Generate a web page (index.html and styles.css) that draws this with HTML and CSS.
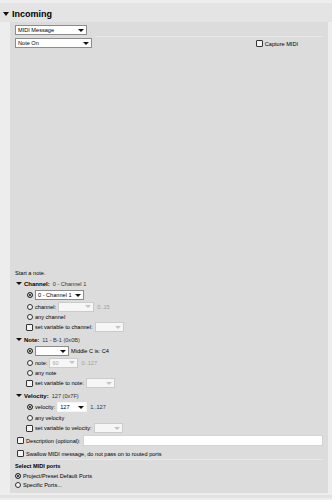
FILE: index.html
```html
<!DOCTYPE html>
<html lang="en">
<head>
  <meta charset="UTF-8" />
  <title>Incoming</title>
  <link rel="stylesheet" href="styles.css">
</head>
<body>
  <div class="section-head"><span class="caret"></span>Incoming</div>

  <div class="panel">
    <div class="type-row">
      <div class="select w72">MIDI Message<span class="arrow"></span></div>
    </div>

    <div class="message-row">
      <div class="select w77">Note On<span class="arrow"></span></div>
      <div class="message-area">
        <div class="check"><span class="box"></span>Capture MIDI</div>
      </div>
    </div>

    <div class="hint">Start a note.</div>

    <!-- channel -->
    <div class="group-head"><span class="caret small"></span><b>Channel:</b><span class="val">0 - Channel 1</span></div>
    <div class="opt sel"><span class="radio on"></span><div class="select w49">0 - Channel 1<span class="arrow"></span></div></div>
    <div class="opt"><span class="radio"></span>channel:<div class="select off w36"><span class="arrow"></span></div><span class="range">0..15</span></div>
    <div class="opt any"><span class="radio"></span>any channel</div>
    <div class="opt var"><span class="box"></span>set variable to channel:<div class="select off w29"><span class="arrow"></span></div></div>

    <!-- note -->
    <div class="group-head"><span class="caret small"></span><b>Note:</b><span class="val">11 - B-1 (0x0B)</span></div>
    <div class="opt sel"><span class="radio on"></span><div class="select w34"><span class="arrow"></span></div>Middle C is: C4</div>
    <div class="opt"><span class="radio"></span>note:<div class="select off w29">60<span class="arrow"></span></div><span class="range">0..127</span></div>
    <div class="opt any"><span class="radio"></span>any note</div>
    <div class="opt var"><span class="box"></span>set variable to note:<div class="select off w29"><span class="arrow"></span></div></div>

    <!-- velocity -->
    <div class="group-head"><span class="caret small"></span><b>Velocity:</b><span class="val">127 (0x7F)</span></div>
    <div class="opt sel"><span class="radio on"></span>velocity:<div class="select plain w30">127<span class="arrow"></span></div><span class="range dark">1..127</span></div>
    <div class="opt any"><span class="radio"></span>any velocity</div>
    <div class="opt var"><span class="box"></span>set variable to velocity:<div class="select off w29"><span class="arrow"></span></div></div>

    <div class="desc-row"><span class="box"></span>Description (optional):<div class="text-input"></div></div>
    <div class="swallow-row"><span class="box"></span>Swallow MIDI message, do not pass on to routed ports</div>

    <div class="ports-head">Select MIDI ports</div>
    <div class="port"><span class="radio on"></span>Project/Preset Default Ports</div>
    <div class="port"><span class="radio"></span>Specific Ports...</div>
  </div>

  <div class="next-bar"></div>
</body>
</html>
```

FILE: styles.css
```css
* {
  box-sizing: border-box;
}
body {
  margin: 0;
  background: #ededed;
  font-family: "Liberation Sans", Arial, sans-serif;
  font-size: 5.6px;
  color: #000;
}
.section-head {
  margin-top: 3px;
  height: 19px;
  padding: 3px 0 0 3px;
  display: flex;
  align-items: center;
  background: #e4e4e4;
  font-size: 9px;
  font-weight: bold;
}
.caret {
  width: 0;
  height: 0;
  border-left: 3px solid transparent;
  border-right: 3px solid transparent;
  border-top: 4px solid #111;
  margin-right: 3px;
}
.caret.small {
  border-top-width: 3px;
  margin-right: 2px;
}
.panel {
  margin: 0 4px 0 10px;
  padding: 3px 5px 4px 5px;
  background: #dcdcdc;
}

/* dropdowns */
.select {
  display: flex;
  align-items: center;
  flex: none;
  height: 10px;
  padding: 0 2px;
  background: #fff;
  border: 1px solid #8c8c8c;
}
.select .arrow {
  margin-left: auto;
  width: 0;
  height: 0;
  border-left: 3px solid transparent;
  border-right: 3px solid transparent;
  border-top: 3px solid #111;
}
.select.off {
  background: #f6f6f6;
  border-color: #cbcbcb;
  color: #aaa;
}
.select.off .arrow {
  border-top-color: #c4c4c4;
}
.select.plain {
  border-color: #f4f4f4;
}
.w29 { width: 29px; }
.w30 { width: 30px; }
.w34 { width: 34px; }
.w36 { width: 36px; }
.w49 { width: 49px; }
.w72 { width: 72px; }
.w77 { width: 77px; }

.message-row {
  display: flex;
  align-items: flex-start;
  height: 230px;
  margin-top: 3px;
}
.message-area {
  flex: 1;
  align-self: stretch;
  margin: -2px 0 0 3px;
  padding: 3px 25px 0 0;
  display: flex;
  justify-content: flex-end;
  align-items: flex-start;
  border-top: 1px solid #e8e8e8;
}
.check {
  display: flex;
  align-items: center;
  gap: 2px;
}

/* radio + checkbox */
.box {
  flex: none;
  width: 7px;
  height: 7px;
  border: 1px solid #333;
  border-radius: 1px;
  background: #f3f3f3;
}
.radio {
  flex: none;
  width: 6px;
  height: 6px;
  border: 1px solid #333;
  border-radius: 50%;
  background: #f3f3f3;
}
.radio.on {
  background: #111;
  box-shadow: inset 0 0 0 1px #f3f3f3;
}

.hint {
  height: 10px;
  line-height: 10px;
}
.group-head {
  height: 11px;
  padding-left: 1px;
  display: flex;
  align-items: center;
}
.group-head b {
  font-size: 6px;
  margin-right: 3px;
}
.group-head .val {
  color: #333;
}
.opt {
  height: 11px;
  padding-left: 12px;
  display: flex;
  align-items: center;
  gap: 2px;
}
.opt.sel {
  height: 12px;
}
.opt.any {
  height: 10px;
}
.opt.var {
  height: 10px;
  margin-bottom: 2px;
  padding-left: 11px;
}
.range {
  color: #a0a0a0;
  margin-left: 1px;
}
.range.dark {
  color: #333;
}

.desc-row {
  height: 11px;
  margin-top: 2px;
  padding-left: 2px;
  display: flex;
  align-items: center;
  gap: 2px;
}
.text-input {
  flex: 1;
  height: 11px;
  margin-left: 1px;
  background: #fff;
  border: 1px solid #d4d4d4;
}
.swallow-row {
  height: 12px;
  margin-top: 2px;
  padding-left: 2px;
  display: flex;
  align-items: center;
  gap: 2px;
  border-bottom: 1px solid #e8e8e8;
}
.ports-head {
  height: 10px;
  margin-top: 1px;
  line-height: 10px;
  font-weight: bold;
}
.port {
  height: 9px;
  display: flex;
  align-items: center;
  gap: 2px;
}
.next-bar {
  margin-top: 2px;
  height: 3px;
  background: #e2e2e2;
}
```
